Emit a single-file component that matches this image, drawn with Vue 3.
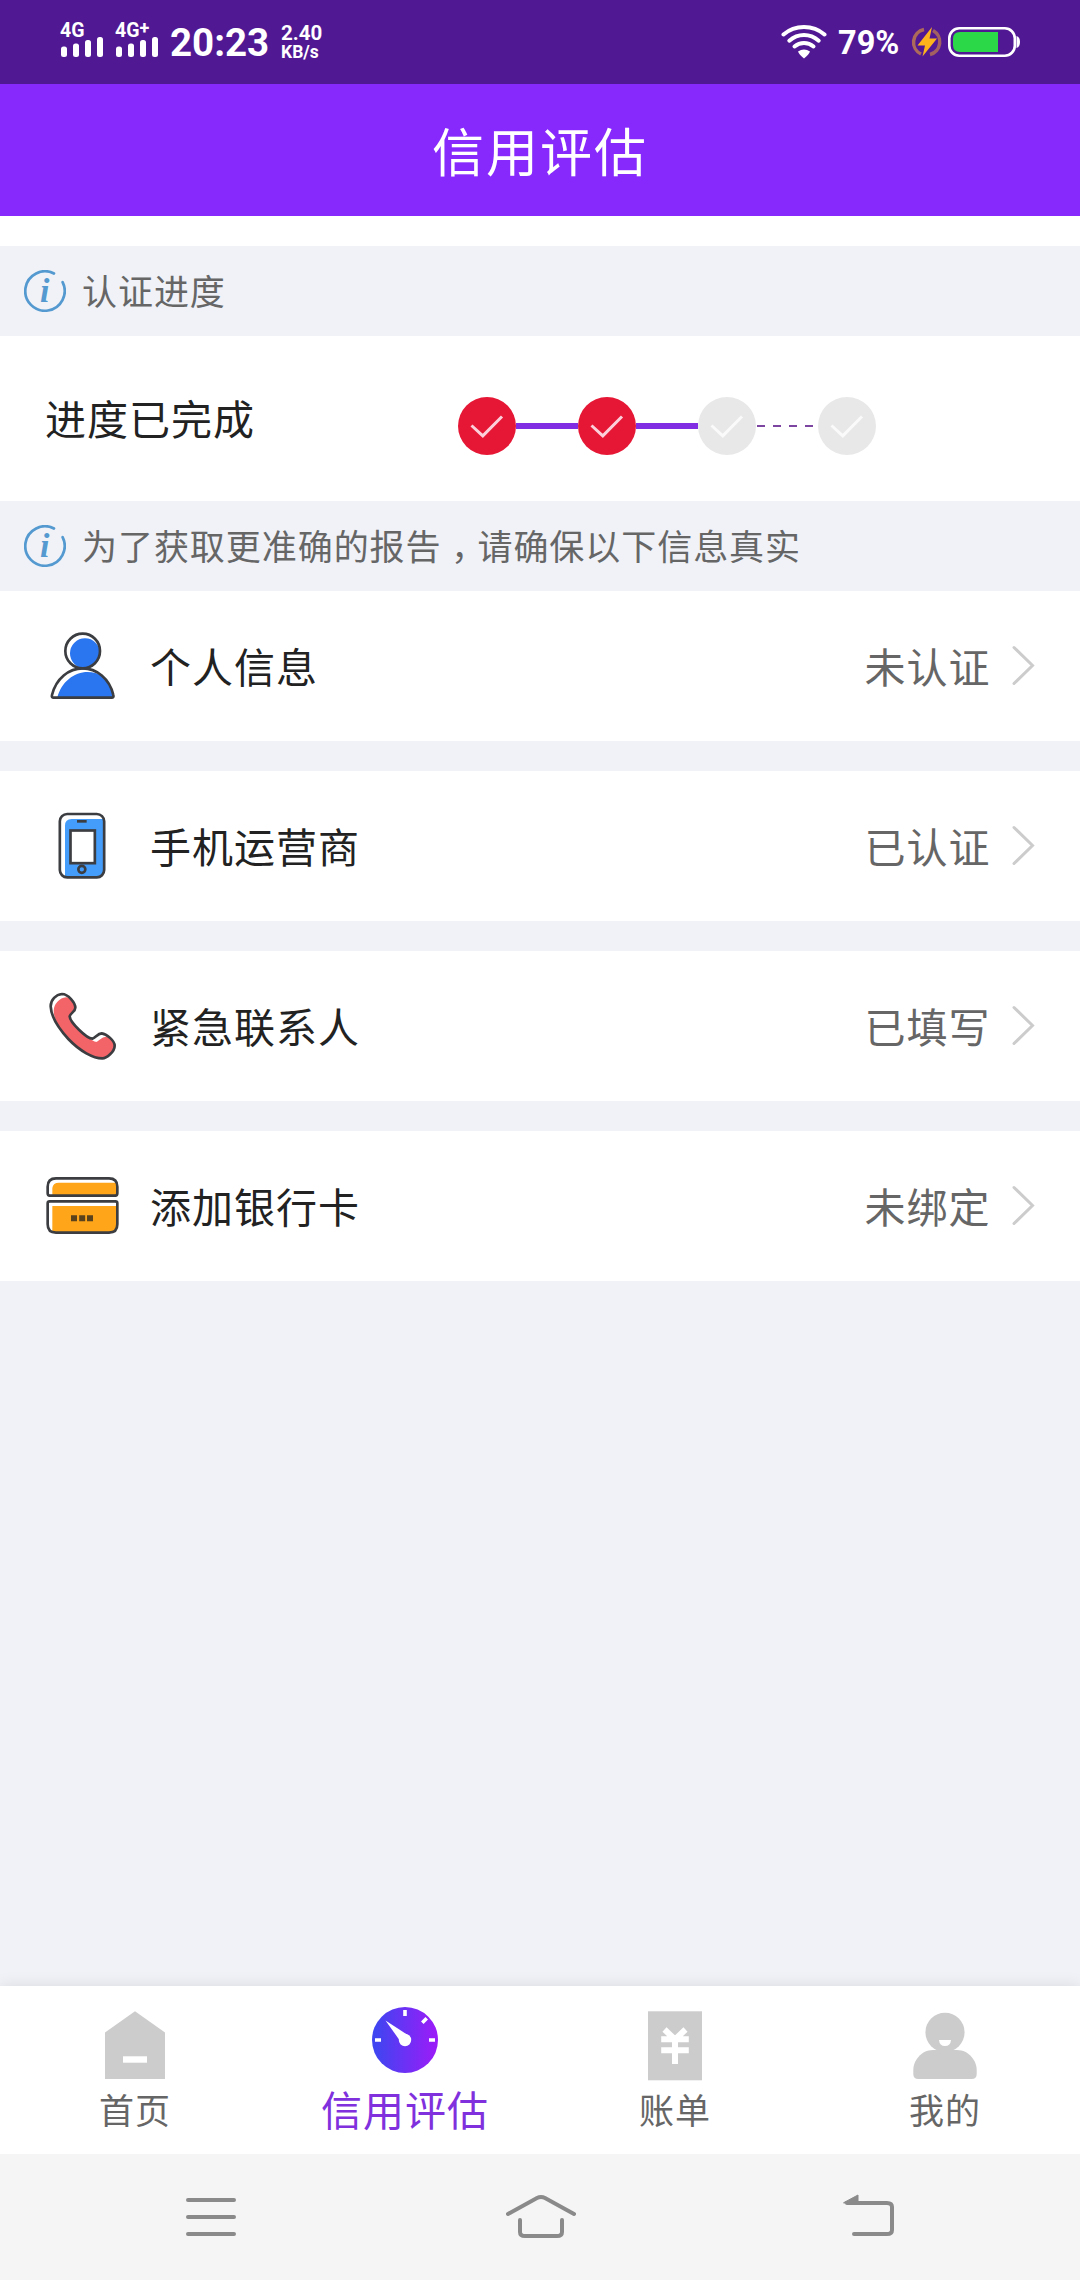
<script setup>
const steps = [
  { done: true, line: 'solid' },
  { done: true, line: 'solid' },
  { done: false, line: 'dashed' },
  { done: false, line: null },
]

const handset =
  'M51 15C33 17 17 32 17 52C18 78 38 115 70 150C105 187 145 208 172 208C185 208 209 188 209 170C209 155 185 135 170 133C158 133 152 146 142 149C125 149 75 100 74 82C76 72 91 68 91 56C91 42 70 15 51 15Z'
const torso =
  'M26 206Q19 206 21 198C33 148 72 118 113 118C154 118 194 148 205 198Q207 206 200 206Z'

const items = [
  { icon: 'person', label: '个人信息', status: '未认证' },
  { icon: 'phone', label: '手机运营商', status: '已认证' },
  { icon: 'handset', label: '紧急联系人', status: '已填写' },
  { icon: 'card', label: '添加银行卡', status: '未绑定' },
]

const tabs = [
  { icon: 'home', label: '首页' },
  { icon: 'gauge', label: '信用评估', active: true },
  { icon: 'bill', label: '账单' },
  { icon: 'me', label: '我的' },
]
</script>

<template>
  <div class="screen">
    <div class="statusbar">
      <svg class="signal" width="55" height="84" viewBox="0 0 55 84">
        <text x="0" y="36.6" class="net">4G</text>
        <rect x="1" y="46.5" width="6" height="10.5" rx="2.5" />
        <rect x="13" y="43.5" width="6" height="13.5" rx="2.5" />
        <rect x="25" y="40" width="6" height="17" rx="2.5" />
        <rect x="37" y="37" width="6" height="20" rx="2.5" />
      </svg>
      <svg class="signal" width="55" height="84" viewBox="0 0 55 84">
        <text x="0" y="36.6" class="net">4G</text>
        <text x="24.5" y="33.5" class="net plus">+</text>
        <rect x="1" y="46.5" width="6" height="10.5" rx="2.5" />
        <rect x="13" y="43.5" width="6" height="13.5" rx="2.5" />
        <rect x="25" y="40" width="6" height="17" rx="2.5" />
        <rect x="37" y="37" width="6" height="20" rx="2.5" />
      </svg>
      <span class="clock">20:23</span>
      <div class="speed"><span class="rate">2.40</span><span class="unit">KB/s</span></div>
      <svg class="wifi" width="46" height="36" viewBox="0 0 46 36">
        <g fill="none" stroke="#fff" stroke-width="4" stroke-linecap="round">
          <path d="M2.5 10.5C14 0.5 32 0.5 43.500 10.500" />
          <path d="M8.300 16.700C17 9 29 9 37.700 16.700" />
          <path d="M13.500 22.500C19 17.800 27 17.800 32.500 22.500" />
        </g>
        <path d="M17 27.500Q23 23.500 29 27.500Q28 30.500 23 34.500Q18 30.500 17 27.500Z" fill="#fff" />
      </svg>
      <span class="percent">79%</span>
      <svg class="bolt" width="32" height="32" viewBox="0 0 32 32">
        <g fill="none" stroke="#c47f4b" stroke-width="3.500">
          <path d="M13 3.500A13 13 0 0 0 10 28" opacity=".8" />
          <path d="M22 4.500A13 13 0 0 1 19 28.500" opacity=".7" />
        </g>
        <path d="M21 1L6.500 19.500H14L11.500 30.500L26 12.500H18.500Z" fill="#fdb31c" />
      </svg>
      <svg class="battery" width="73" height="30" viewBox="0 0 73 30">
        <rect x="1.300" y="1.300" width="65.500" height="27.400" rx="10" fill="none" stroke="#fff" stroke-width="2.600" />
        <path d="M50 5V25H12Q5 25 5 18V12Q5 5 12 5Z" fill="#2bd847" />
        <path d="M68.500 9Q72 10 72 15Q72 20 68.500 21Z" fill="#fff" />
      </svg>
    </div>

    <header class="title">信用评估</header>

    <div class="section first">
      <svg class="info" width="42" height="42" viewBox="0 0 42 42">
        <path d="M30 3.500A19.700 19.700 0 1 0 38.600 12.200" />
        <text x="16" y="32.300">i</text>
      </svg>
      <span class="section-text">认证进度</span>
    </div>

    <div class="progress">
      <span class="progress-label">进度已完成</span>
      <div class="steps">
        <template v-for="(s, i) in steps" :key="i">
          <svg class="step" width="58" height="58" viewBox="0 0 58 58">
            <circle cx="29" cy="29" r="29" :fill="s.done ? '#e61735' : '#e8e8e8'" />
            <path d="M13.500 28.500L24.800 38.800L44 19.500" :stroke="s.done ? '#fbd0da' : '#fafafa'" />
          </svg>
          <span v-if="s.line" class="line" :class="s.line"></span>
        </template>
      </div>
    </div>

    <div class="section">
      <svg class="info" width="42" height="42" viewBox="0 0 42 42">
        <path d="M30 3.500A19.700 19.700 0 1 0 38.600 12.200" />
        <text x="16" y="32.300">i</text>
      </svg>
      <span class="section-text">为了获取更准确的报告<span class="comma">，</span>请确保以下信息真实</span>
    </div>

    <main class="list">
      <div v-for="item in items" :key="item.icon" class="row">
        <svg class="icon" width="75" height="75" viewBox="0 0 225 225">
          <template v-if="item.icon === 'person'">
            <defs>
              <clipPath id="torso-clip"><path :d="torso" /></clipPath>
            </defs>
            <circle cx="120" cy="73" r="45" fill="#2a75f0" />
            <g clip-path="url(#torso-clip)">
              <path :d="torso" transform="translate(15 11)" fill="#2a75f0" />
            </g>
            <circle cx="113" cy="66" r="52" />
            <path :d="torso" />
          </template>
          <template v-else-if="item.icon === 'phone'">
            <path d="M60 203V50Q60 30 80 30H177V187Q177 205 159 205H62Z" fill="#449dfb" />
            <rect x="44.500" y="15" width="133" height="190" rx="22" />
            <rect x="76.500" y="64.500" width="73" height="98" fill="#fff" />
            <path d="M96 37H125" />
            <circle cx="110.500" cy="181" r="10.500" />
          </template>
          <template v-else-if="item.icon === 'handset'">
            <defs>
              <clipPath id="handset-clip"><path :d="handset" /></clipPath>
            </defs>
            <g clip-path="url(#handset-clip)">
              <path :d="handset" transform="translate(13 14)" fill="#f36468" stroke="#f36468" />
            </g>
            <path :d="handset" />
          </template>
          <template v-else>
            <path d="M22 80V57Q24 41 42 41H216V80Z" fill="#fea519" />
            <path d="M22 189V111H216V171Q214 190 196 190H26Z" fill="#fea519" />
            <path d="M14 80Q8 80 8 73V53Q8 28 33 28H192Q217 28 217 53V73Q217 80 211 80Z" />
            <path d="M14 97H211Q217 97 217 103V166Q217 191 192 191H33Q8 191 8 166V103Q8 97 14 97Z" />
            <path d="M78 139h18v18h-18zM102.500 139h18v18h-18zM126 139h18v18h-18z" class="dots" />
          </template>
        </svg>
        <span class="label">{{ item.label }}</span>
        <span class="status">{{ item.status }}</span>
        <svg class="chevron" width="24" height="42" viewBox="0 0 24 42">
          <path d="M3 2.500L21.500 20.500L3 38.500" />
        </svg>
      </div>
    </main>

    <nav class="tabbar">
      <div v-for="t in tabs" :key="t.icon" class="tab" :class="{ active: t.active }">
        <svg width="84" height="84" viewBox="0 0 84 84" fill="#ccc">
          <template v-if="t.icon === 'home'">
            <path d="M42 13.300L72 34.500V81H12V34.500Z" />
            <rect x="30" y="58.300" width="24" height="6.400" fill="#fff" />
          </template>
          <template v-else-if="t.icon === 'gauge'">
            <defs>
              <linearGradient id="gauge-fill" x1="0" x2="1" y1="0" y2="0">
                <stop offset="0.050" stop-color="#3f45f1" />
                <stop offset="0.950" stop-color="#991df8" />
              </linearGradient>
            </defs>
            <circle cx="42" cy="42" r="33" fill="url(#gauge-fill)" />
            <path d="M42 12V18M12 42H18M66 42H72M59.300 24.700L63.700 20.300" stroke="#fff" stroke-width="3.600" />
            <path d="M22.500 22.500L44 36.500L37.500 43.500Z" fill="#fff" />
            <circle cx="42" cy="42" r="6.200" fill="#fff" />
          </template>
          <template v-else-if="t.icon === 'bill'">
            <rect x="15" y="13.300" width="54" height="69" />
            <path
              d="M31.500 31.500L42 41.500L52.500 31.500M28.200 41.300H55.800M28.200 52.200H55.800M42 41V66"
              fill="none" stroke="#fff" stroke-width="6"
            />
          </template>
          <template v-else>
            <circle cx="42" cy="34.300" r="19.600" />
            <path d="M30 52H54C66 52 73.700 63 73.700 72V76Q73.700 81 68.700 81H15.300Q10.300 81 10.300 76V72C10.300 63 18 52 30 52Z" />
            <path d="M36 42H48Q47.500 48 42 48Q36.500 48 36 42Z" fill="#fff" />
          </template>
        </svg>
        <span>{{ t.label }}</span>
      </div>
    </nav>

    <footer class="sysnav">
      <svg width="50" height="46" viewBox="0 0 50 46">
        <path d="M2 6H48M2 23H48M2 40H48" />
      </svg>
      <svg class="house" width="70" height="46" viewBox="0 0 70 46">
        <path d="M2 20L31 4Q35 2 39 4L68 20" />
        <path d="M14 26V38Q14 42 19 42H51Q56 42 56 38V26" />
      </svg>
      <svg width="52" height="46" viewBox="0 0 52 46">
        <path d="M4 9H44Q49 9 49 13V36Q49 40 44 40H11" />
        <path d="M1 8.500L15 1V9H1Z" class="head" />
      </svg>
    </footer>
  </div>
</template>

<style>
body {
  margin: 0;
}
</style>

<style scoped>
.screen {
  display: flex;
  flex-direction: column;
  width: 1080px;
  height: 2280px;
  overflow: hidden;
  background: #f0f2f8;
  font-family: 'Noto Sans CJK SC', sans-serif;
  white-space: nowrap;
}
svg {
  display: block;
  flex: none;
}
.statusbar {
  display: flex;
  flex: none;
  align-items: center;
  height: 84px;
  padding: 0 59px 0 60px;
  box-sizing: border-box;
  background: #511894;
  color: #fff;
  font-family: Roboto, sans-serif;
  font-weight: 700;
}
.signal {
  fill: #fff;
}
.net {
  font-size: 19.500px;
}
.plus {
  font-size: 18px;
}
.clock {
  width: 111px;
  padding-top: 2px;
  font-size: 38.500px;
  line-height: 86px;
}
.speed {
  display: flex;
  flex-direction: column;
  margin-right: auto;
}
.rate {
  font-size: 20.500px;
  line-height: 20px;
}
.unit {
  font-size: 17.500px;
  line-height: 18px;
}
.percent {
  width: 73px;
  margin-left: 11px;
  padding-top: 2px;
  font-size: 32.500px;
  line-height: 86px;
}
.battery {
  margin-left: 5px;
}
.title {
  flex: none;
  height: 132px;
  background: #8729fc;
  color: #fff;
  font-size: 52px;
  line-height: 132px;
  letter-spacing: 2px;
  text-align: center;
}
.section {
  display: flex;
  flex: none;
  align-items: center;
  gap: 16px;
  height: 90px;
  padding-left: 24px;
  color: #666;
  font-size: 35px;
  letter-spacing: 0.950px;
}
.section-text {
  padding-bottom: 3px;
}
.first {
  border-top: 30px solid #fff;
}
.info path {
  fill: none;
  stroke: #5499cf;
  stroke-width: 2.700;
  stroke-linecap: round;
}
.info text {
  fill: #5499cf;
  font: italic 700 34px 'Liberation Serif', serif;
}
.comma {
  padding: 0 8px 0 9.500px;
  font-feature-settings: 'halt';
}
.progress {
  display: flex;
  flex: none;
  align-items: center;
  height: 165px;
  padding-left: 45px;
  background: #fff;
}
.progress-label {
  width: 413px;
  padding-bottom: 3px;
  color: #222;
  font-size: 41px;
  letter-spacing: 1px;
}
.steps {
  display: flex;
  align-items: center;
  padding-top: 15px;
}
.step path {
  fill: none;
  stroke-width: 3;
}
.line {
  width: 62px;
}
.solid {
  height: 6px;
  background: #812de4;
}
.dashed {
  height: 2px;
  background: repeating-linear-gradient(90deg, transparent 0 1px, #7b45a0 1px 9px, transparent 9px 16px);
}
.list {
  display: flex;
  flex: 1;
  flex-direction: column;
  gap: 30px;
}
.row {
  display: flex;
  align-items: center;
  height: 150px;
  padding: 0 45px;
  background: #fff;
  font-size: 41px;
  letter-spacing: 1px;
}
.icon {
  fill: none;
  stroke: #3b3d40;
  stroke-width: 8;
}
.icon [fill^='#2'],
.icon [fill^='#4'],
.icon [fill^='#fe'] {
  stroke: none;
}
.icon .dots {
  fill: #5a421c;
  stroke: none;
}
.label {
  margin-left: 30px;
  padding-bottom: 3px;
  color: #222;
}
.status {
  margin-left: auto;
  padding-bottom: 3px;
  color: #666;
}
.chevron {
  margin-left: 20.500px;
  fill: none;
  stroke: #ccc;
  stroke-width: 3;
  stroke-linecap: round;
}
.tabbar {
  display: flex;
  flex: none;
  height: 168px;
  background: #fff;
  box-shadow: 0 0 15px rgba(0, 0, 0, 0.100);
}
.tab {
  display: flex;
  flex: 1;
  flex-direction: column;
  align-items: center;
  padding-top: 12px;
  color: #666;
  font-size: 35px;
  line-height: 53px;
  letter-spacing: 0.900px;
}
.active {
  color: #8030dd;
  font-size: 41px;
  letter-spacing: 1px;
}
.sysnav {
  display: flex;
  position: relative;
  flex: none;
  align-items: center;
  justify-content: space-between;
  height: 126px;
  padding: 0 185px 0 186px;
  box-sizing: border-box;
  background: #f5f5f5;
}
.house {
  margin-left: 3px;
}
.sysnav path {
  fill: none;
  stroke: #8a8a8a;
  stroke-width: 4;
  stroke-linecap: round;
}
.sysnav .head {
  fill: #8a8a8a;
  stroke-width: 1;
}
</style>
